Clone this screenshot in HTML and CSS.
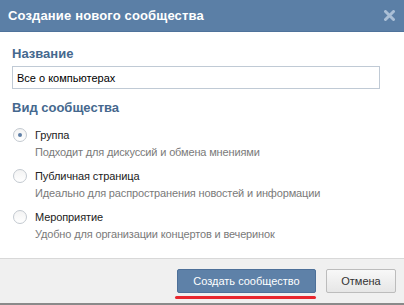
FILE: index.html
```html
<!DOCTYPE html>
<html lang="ru">
<head>
    <meta charset="UTF-8">
    <title>Создание нового сообщества</title>
    <link rel="stylesheet" href="styles.css">
</head>
<body>
    <div class="dialog">
        <div class="dialog-header">
            <div class="dialog-title">Создание нового сообщества</div>
            <div class="dialog-close">
                <svg width="11" height="11" viewBox="0 0 11 11">
                    <path d="M1.5 1.5 L9.5 9.5 M9.5 1.5 L1.5 9.5" stroke="#b3c6dc" stroke-width="3" stroke-linecap="round"/>
                </svg>
            </div>
        </div>

        <div class="dialog-body">
            <div class="section-title">Название</div>
            <input class="name-input" type="text" value="Все о компьютерах">

            <div class="section-title type-title">Вид сообщества</div>
            <div class="type-list">
                <div class="type-item">
                    <span class="radio checked"></span>
                    <div class="type-text">
                        <div class="type-name">Группа</div>
                        <div class="type-desc">Подходит для дискуссий и обмена мнениями</div>
                    </div>
                </div>
                <div class="type-item">
                    <span class="radio"></span>
                    <div class="type-text">
                        <div class="type-name">Публичная страница</div>
                        <div class="type-desc">Идеально для распространения новостей и информации</div>
                    </div>
                </div>
                <div class="type-item">
                    <span class="radio"></span>
                    <div class="type-text">
                        <div class="type-name">Мероприятие</div>
                        <div class="type-desc">Удобно для организации концертов и вечеринок</div>
                    </div>
                </div>
            </div>
        </div>

        <div class="dialog-footer">
            <div class="btn-wrap marked">
                <button class="btn btn-blue">Создать сообщество</button>
            </div>
            <button class="btn btn-gray">Отмена</button>
        </div>
    </div>
</body>
</html>
```

FILE: styles.css
```css
body {
    margin: 0;
    padding: 0;
    background: #fff;
    font-family: 'Liberation Sans', Arial, sans-serif;
    font-size: 11px;
    color: #000;
}

.dialog {
    width: 404px;
    height: 305px;
    display: flex;
    flex-direction: column;
    border-bottom: 2px solid #8a8a8a;
    box-sizing: border-box;
}

.dialog-header {
    height: 31px;
    background: #5b7fa6;
    border-bottom: 1px solid #4f739b;
    display: flex;
    align-items: center;
    justify-content: space-between;
    padding: 0 9px 0 8px;
}

.dialog-title {
    color: #fff;
    font-weight: bold;
    font-size: 13px;
    letter-spacing: 0.15px;
}

.dialog-close {
    display: flex;
    opacity: 0.9;
}

.dialog-body {
    flex: 1;
    padding: 14px 24px 0 12px;
}

.section-title {
    color: #45688e;
    font-weight: bold;
    font-size: 13px;
    line-height: 16px;
}

.type-title {
    margin-top: 11px;
}

.name-input {
    display: block;
    box-sizing: border-box;
    width: 368px;
    height: 23px;
    margin-top: 4px;
    border: 1px solid #c0cad5;
    padding: 2px 4px;
    font-family: inherit;
    font-size: 11px;
    color: #000;
}

.type-list {
    margin-top: 12px;
    display: flex;
    flex-direction: column;
    gap: 10px;
}

.type-item {
    display: flex;
    align-items: flex-start;
}

.radio {
    box-sizing: border-box;
    width: 14px;
    height: 14px;
    margin: 0 8px 0 1px;
    border: 1px solid #c3c9d0;
    border-radius: 50%;
    background: linear-gradient(#f3f3f3, #fff);
    display: flex;
    align-items: center;
    justify-content: center;
}

.radio.checked::after {
    content: '';
    width: 4px;
    height: 4px;
    border-radius: 50%;
    background: #5f7fa6;
}

.type-name {
    line-height: 14px;
    color: #222;
    letter-spacing: -0.1px;
}

.type-desc {
    margin-top: 3px;
    line-height: 14px;
    color: #7a7a7a;
    letter-spacing: -0.15px;
}

.dialog-footer {
    height: 44px;
    background: #f0f0f0;
    border-top: 1px solid #d8d8d8;
    display: flex;
    align-items: center;
    justify-content: flex-end;
    gap: 10px;
    padding-right: 8px;
}

.btn-wrap {
    position: relative;
    display: flex;
}

.btn-wrap.marked::after {
    content: '';
    position: absolute;
    left: -2px;
    right: 0;
    bottom: -6px;
    height: 3px;
    border-radius: 2px;
    background: #e8262e;
}

.btn {
    height: 24px;
    font-family: inherit;
    font-size: 11px;
    border-radius: 2px;
    cursor: pointer;
}

.btn-blue {
    width: 139px;
    background: #5e81a8;
    border: 1px solid #4d7099;
    color: #fff;
}

.btn-gray {
    width: 70px;
    background: linear-gradient(#f8f8f8, #e6e6e6);
    border: 1px solid #bcbcbc;
    color: #333;
}
```
